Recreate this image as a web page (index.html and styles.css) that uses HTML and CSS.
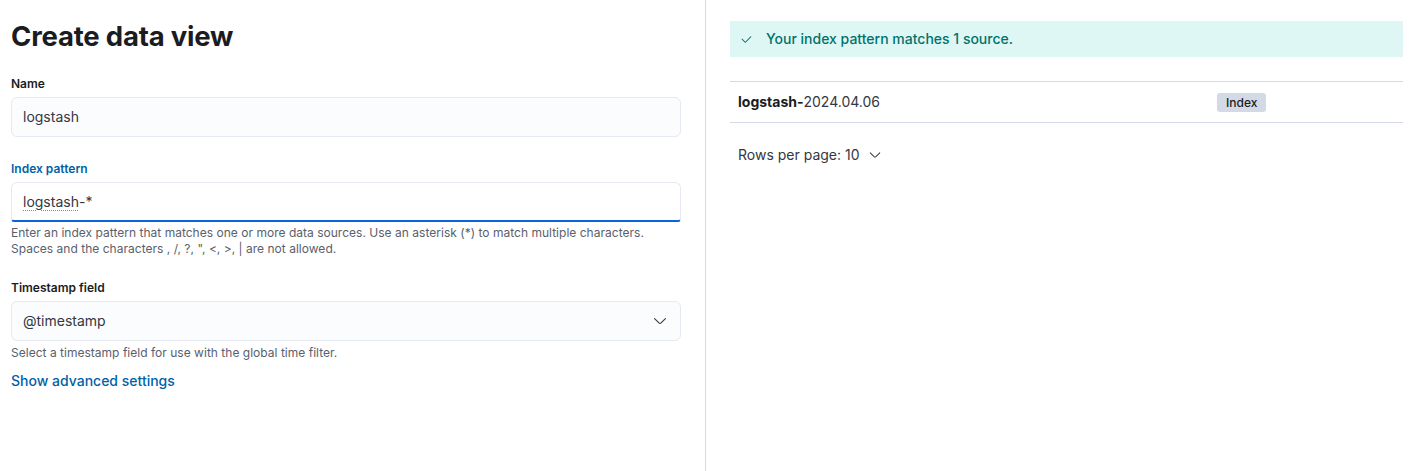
FILE: index.html
```html
<!DOCTYPE html>
<html lang="en">
<head>
<meta charset="utf-8">
<title>Create data view</title>
<link rel="stylesheet" href="styles.css">
</head>
<body>
<div class="layout">
  <section class="left">
    <h1 class="title">Create data view</h1>

    <div class="field">
      <label class="label">Name</label>
      <div class="input">logstash</div>
    </div>

    <div class="field">
      <label class="label label-focus">Index pattern</label>
      <div class="input input-focus"><span class="spell">logstash</span>-*</div>
      <div class="help">Enter an index pattern that matches one or more data sources. Use an asterisk (*) to match multiple characters.<br>Spaces and the characters , /, ?, ", &lt;, &gt;, | are not allowed.</div>
    </div>

    <div class="field field-ts">
      <label class="label">Timestamp field</label>
      <div class="input select">
        <span>@timestamp</span>
        <svg class="chev" width="16" height="16" viewBox="0 0 16 16"><path d="M13.069 5.157L8.384 9.768a.546.546 0 01-.768 0L2.93 5.158a.552.552 0 00-.771 0 .53.53 0 000 .759l4.684 4.61c.641.631 1.672.63 2.312 0l4.684-4.61a.53.53 0 000-.76.552.552 0 00-.771 0z"/></svg>
      </div>
      <div class="help">Select a timestamp field for use with the global time filter.</div>
    </div>

    <a class="link" href="#">Show advanced settings</a>
  </section>

  <section class="right">
    <div class="callout">
      <svg class="check" width="16" height="16" viewBox="0 0 16 16"><path d="M6.5 12a.502.502 0 01-.354-.146l-4-4a.502.502 0 01.708-.708L6.5 10.793l6.646-6.647a.502.502 0 01.708.708l-7 7A.502.502 0 016.5 12"/></svg>
      <span>Your index pattern matches 1 source.</span>
    </div>

    <div class="table">
      <div class="row">
        <div class="cell"><strong>logstash-</strong>2024.04.06</div>
        <div class="cell"><span class="badge">Index</span></div>
      </div>
    </div>

    <div class="pager">
      <span>Rows per page: 10</span>
      <svg class="chev small" width="16" height="16" viewBox="0 0 16 16"><path d="M13.069 5.157L8.384 9.768a.546.546 0 01-.768 0L2.93 5.158a.552.552 0 00-.771 0 .53.53 0 000 .759l4.684 4.61c.641.631 1.672.63 2.312 0l4.684-4.61a.53.53 0 000-.76.552.552 0 00-.771 0z"/></svg>
    </div>
  </section>
</div>
</body>
</html>
```

FILE: styles.css
```css
* { box-sizing: border-box; }
html, body { margin: 0; padding: 0; background: #fff; }
body {
  font-family: Inter, "Noto Sans", sans-serif;
  color: #343741;
  font-size: 14px;
  line-height: 20px;
  width: 1419px;
  height: 471px;
  overflow: hidden;
}
.layout {
  display: grid;
  grid-template-columns: 706px 1fr;
  height: 471px;
}
.left {
  padding: 16px 24px 0 11px;
  border-right: 1px solid #d3dae6;
}
.title {
  margin: 0;
  font-size: 27.5px;
  line-height: 40px;
  font-weight: 700;
  color: #1a1c21;
  letter-spacing: -0.2px;
}
.field { display: flex; flex-direction: column; }
.field + .field { margin-top: 24px; }
.field + .field-ts { margin-top: 23px; }
.title + .field { margin-top: 20px; }
.label {
  font-size: 12px;
  line-height: 16px;
  font-weight: 600;
  color: #1a1c21;
  margin-bottom: 5px;
}
.label-focus { color: #0061a6; }
.input {
  height: 40px;
  border: 1px solid #e6e9ef;
  border-radius: 6px;
  background: #fbfcfd;
  padding: 0 11px;
  display: flex;
  align-items: center;
  font-size: 14px;
  color: #343741;
}
.input-focus {
  background: #fff;
  border-bottom: 2px solid #0b64dd;
  border-radius: 6px 6px 3px 3px;
  padding-top: 1px;
}
.spell {
  text-decoration: underline dotted #e7664c;
  text-decoration-thickness: 1px;
  text-underline-offset: 3px;
}
.select { justify-content: space-between; padding-right: 12px; }
.chev { fill: #343741; }
.help {
  font-size: 12px;
  line-height: 16px;
  color: #5a606b;
  margin-top: 3px;
  letter-spacing: 0.02px;
}
.select + .help { margin-top: 4px; }
.link {
  display: inline-block;
  margin-top: 10px;
  color: #0061a6;
  text-decoration: none;
  font-weight: 500;
  font-size: 14px;
  line-height: 20px;
}
.right {
  padding: 21px 16px 0 24px;
}
.callout {
  height: 36px;
  background: #dff7f4;
  display: flex;
  align-items: center;
  padding-left: 10px;
  color: #00726b;
  font-weight: 500;
  font-size: 14px;
}
.check { fill: #00726b; margin-right: 13px; width: 13px; height: 13px; }
.table {
  margin-top: 24px;
  border-top: 1px solid #d3dae6;
  border-bottom: 1px solid #d3dae6;
}
.row {
  display: grid;
  grid-template-columns: 479px 1fr;
  height: 40px;
  align-items: center;
}
.cell { padding: 0 8px; color: #343741; }
.cell strong { font-weight: 700; color: #1a1c21; }
.badge {
  display: inline-block;
  background: #d3dae6;
  color: #1a1c21;
  font-size: 12px;
  line-height: 19px;
  font-weight: 500;
  padding: 0 9px;
  border-radius: 3px;
}
.pager {
  display: flex;
  align-items: center;
  gap: 8px;
  margin-top: 22px;
  padding-left: 8px;
  font-size: 14px;
  color: #343741;
}
.pager .chev { width: 14px; height: 14px; }
```
